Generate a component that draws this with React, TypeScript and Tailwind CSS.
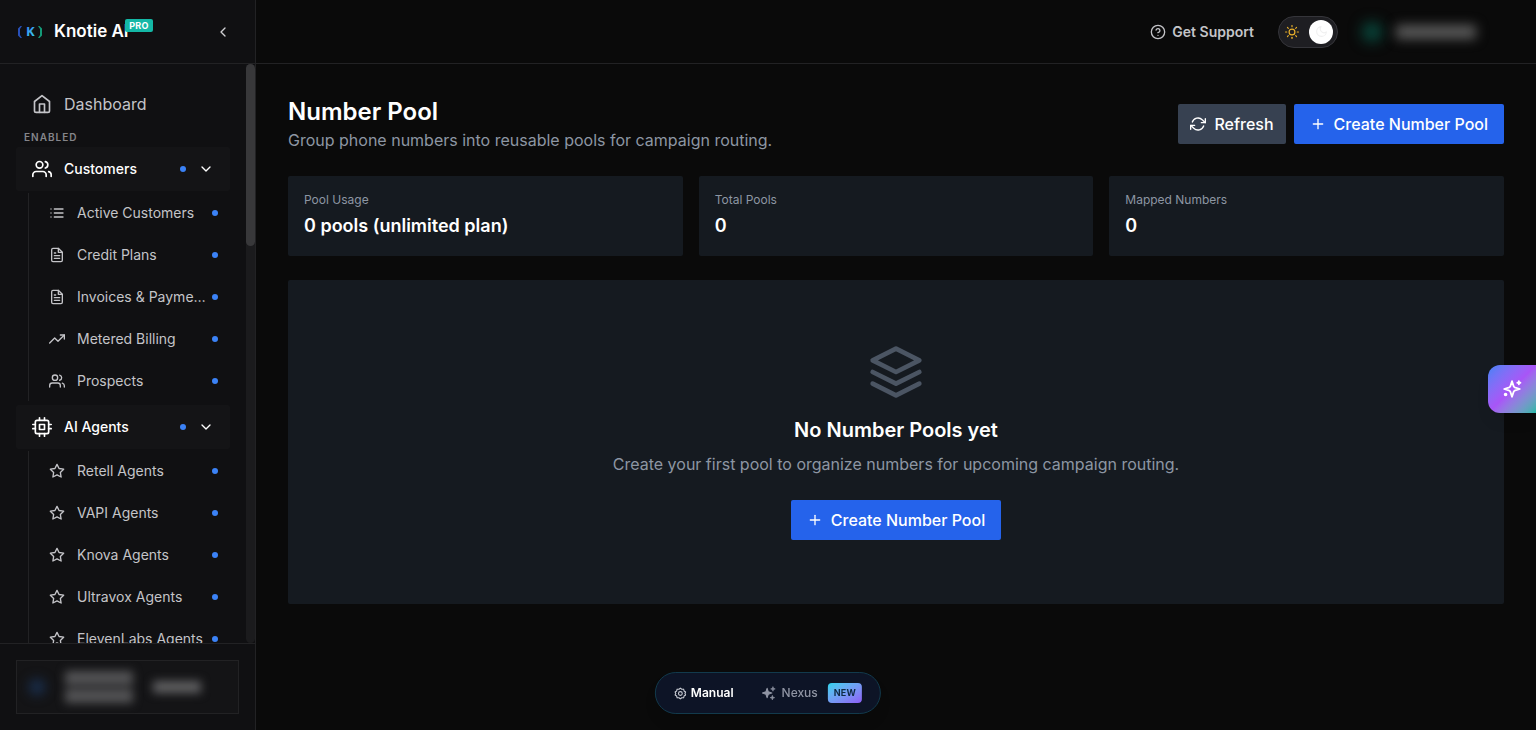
import { useState } from "react";
import {
  FiChevronDown,
  FiChevronLeft,
  FiCpu,
  FiFileText,
  FiHelpCircle,
  FiHome,
  FiLayers,
  FiList,
  FiMoon,
  FiPlus,
  FiRefreshCw,
  FiStar,
  FiSun,
  FiTrendingUp,
  FiUsers,
} from "react-icons/fi";

const menu = [
  {
    title: "Customers",
    icon: FiUsers,
    items: [
      { label: "Active Customers", icon: FiList },
      { label: "Credit Plans", icon: FiFileText },
      { label: "Invoices & Payments", icon: FiFileText },
      { label: "Metered Billing", icon: FiTrendingUp },
      { label: "Prospects", icon: FiUsers },
    ],
  },
  {
    title: "AI Agents",
    icon: FiCpu,
    items: [
      { label: "Retell Agents", icon: FiStar },
      { label: "VAPI Agents", icon: FiStar },
      { label: "Knova Agents", icon: FiStar },
      { label: "Ultravox Agents", icon: FiStar },
      { label: "ElevenLabs Agents", icon: FiStar },
    ],
  },
];

const stats = [
  { label: "Pool Usage", value: "0 pools (unlimited plan)" },
  { label: "Total Pools", value: "0" },
  { label: "Mapped Numbers", value: "0" },
];

const Logo = () => (
  <svg width="28" height="16" viewBox="0 0 28 16" fill="none" aria-hidden="true">
    <defs>
      <linearGradient id="logo-k" x1="9" y1="2" x2="18" y2="14" gradientUnits="userSpaceOnUse">
        <stop stopColor="#3b82f6" />
        <stop offset="1" stopColor="#38d0e8" />
      </linearGradient>
    </defs>
    <path d="M6 2H4.500L2 4.500v7L4.500 14H6L4 11V5z" fill="#2850b8" />
    <path d="M22 2h1.500L26 4.500v7L23.500 14H22l2-3V5z" fill="#149a78" />
    <text x="10" y="12" fontSize="13" fontWeight="700" fontFamily="Open Sans, sans-serif" fill="url(#logo-k)">
      K
    </text>
  </svg>
);

const Dot = () => <span className="w-1.5 h-1.5 shrink-0 rounded-full bg-[#3b82f6]" />;

const CreateButton = () => (
  <button className="h-10 px-4 flex items-center gap-2 rounded-xs bg-[#2563eb] hover:bg-blue-700 text-base font-medium text-white">
    <FiPlus size={16} />
    Create Number Pool
  </button>
);

const Sidebar = () => (
  <aside className="sticky top-0 w-64 h-screen shrink-0 flex flex-col bg-[#101012] border-r border-[#222224]">
    {/* Brand */}
    <div className="h-16 shrink-0 px-4 flex items-center border-b border-[#222224]">
      <a href="#" className="flex items-center gap-2.5">
        <Logo />
        <span className="relative text-[17px] font-semibold text-white">
          Knotie AI
          <span className="absolute top-0 -right-6 px-1 rounded-xs bg-[#14b8a6] text-[9px] leading-[13px] font-bold tracking-wide text-white">
            PRO
          </span>
        </span>
      </a>
      <button className="ml-auto p-2 text-[#d0d0d3]" aria-label="Collapse sidebar">
        <FiChevronLeft size={16} />
      </button>
    </div>

    {/* Menu */}
    <div className="flex-1 min-h-0 flex">
      <nav className="flex-1 min-w-0 p-4 overflow-y-auto [scrollbar-width:none]">
        <a href="#" className="h-12 px-4 flex items-center gap-3 text-base text-[#c4c4c8]">
          <FiHome size={20} />
          Dashboard
        </a>
        <p className="h-[19px] px-2 flex items-center text-[10px] font-semibold tracking-widest text-[#85858a]">
          ENABLED
        </p>
        {menu.map((group) => (
          <div key={group.title} className="mb-1">
            <button className="w-full h-11 px-4 flex items-center gap-3 rounded-xs bg-[#141416] text-sm font-medium text-white">
              <group.icon size={20} />
              <span className="flex-1 text-left">{group.title}</span>
              <Dot />
              <FiChevronDown size={16} />
            </button>
            <ul className="mt-0.5 ml-3 pl-2 flex flex-col gap-0.5 border-l border-[#222224]">
              {group.items.map((item) => (
                <li key={item.label}>
                  <a href="#" className="h-10 px-3 flex items-center text-sm text-[#c4c4c8] hover:text-white">
                    <item.icon size={16} className="shrink-0 mr-3" />
                    <span className="flex-1 mr-1 truncate">{item.label}</span>
                    <Dot />
                  </a>
                </li>
              ))}
            </ul>
          </div>
        ))}
      </nav>
      <div className="w-[9px] shrink-0 rounded-full bg-[#1b1b1d]">
        <div className="h-[182px] rounded-full bg-[#38383a]" />
      </div>
    </div>

    {/* Account */}
    <div className="shrink-0 p-4 border-t border-[#222224]">
      <button
        className="w-full h-[54px] px-3 flex items-center bg-[#141416] border border-[#222224]"
        aria-label="Account"
      >
        <span className="w-4 h-4 rounded-full bg-[#1a3050] blur-[6px]" />
        <span className="ml-5 flex flex-col gap-1 blur-[5px]">
          <span className="w-[68px] h-3.5 bg-[#545456]" />
          <span className="w-[68px] h-3.5 bg-[#545456]" />
        </span>
        <span className="ml-5 w-12 h-3 bg-[#606062] blur-[5px]" />
      </button>
    </div>
  </aside>
);

const Topbar = () => {
  const [dark, setDark] = useState(true);

  return (
    <header className="h-16 shrink-0 px-8 flex items-center justify-end border-b border-[#222224]">
      <a href="#" className="flex items-center gap-1.5 text-sm font-semibold text-[#c4c4c8]">
        <FiHelpCircle size={16} />
        Get Support
      </a>
      <label className="ml-6 w-[60px] h-8 pl-1.5 pr-1 flex items-center justify-between rounded-full bg-[#1e1e22] border border-[#35353a] cursor-pointer">
        <input
          type="checkbox"
          className="sr-only"
          aria-label="Dark mode"
          checked={dark}
          onChange={() => setDark(!dark)}
        />
        <FiSun size={14} className="text-[#eab02a]" />
        <span className="w-6 h-6 flex items-center justify-center rounded-full bg-white text-[#f0f0f0]">
          <FiMoon size={13} />
        </span>
      </label>
      <button className="ml-6 w-[142px] h-8 flex items-center" aria-label="Profile">
        <span className="w-5 h-5 rounded-full bg-[#084a3e] blur-[7px]" />
        <span className="ml-3.5 w-20 h-3.5 bg-[#5a5a5a] blur-[6px]" />
      </button>
    </header>
  );
};

const App = () => {
  return (
    <div className="min-h-screen flex bg-[#0a0a0a] text-white font-['Inter',sans-serif]">
      <Sidebar />
      <div className="flex-1 min-w-0 flex flex-col">
        <Topbar />
        <main className="p-8 flex flex-col gap-6">
          <div className="flex items-center justify-between">
            <div>
              <h1 className="text-2xl font-semibold">Number Pool</h1>
              <p className="text-base text-[#8d96a3]">
                Group phone numbers into reusable pools for campaign routing.
              </p>
            </div>
            <div className="flex gap-2">
              <button className="h-10 px-3 flex items-center gap-2 rounded-xs bg-[#374151] hover:bg-gray-600 text-base font-medium text-white">
                <FiRefreshCw size={16} />
                Refresh
              </button>
              <CreateButton />
            </div>
          </div>

          <div className="grid grid-cols-3 gap-4">
            {stats.map((stat) => (
              <div key={stat.label} className="p-4 rounded-xs bg-[#151a20]">
                <p className="text-xs text-[#8d96a3]">{stat.label}</p>
                <p className="mt-1 text-lg font-semibold">{stat.value}</p>
              </div>
            ))}
          </div>

          <section className="p-16 flex flex-col items-center rounded-xs bg-[#151a20]">
            <FiLayers size={56} className="text-[#4b5563]" />
            <h2 className="mt-4 text-xl font-semibold">No Number Pools yet</h2>
            <p className="mt-2 mb-6 text-base text-[#8d96a3]">
              Create your first pool to organize numbers for upcoming campaign routing.
            </p>
            <CreateButton />
          </section>
        </main>
      </div>

      {/* Mode switcher */}
      <div className="fixed bottom-4 left-1/2 -translate-x-1/2 h-[42px] px-[18px] flex items-center rounded-full bg-[#0d1426] border border-[#123a4c] text-xs shadow-lg">
        <button className="flex items-center gap-1 font-semibold text-white">
          <svg width="13" height="13" viewBox="0 0 24 24" fill="none" stroke="#c9ccd4" strokeWidth="2" strokeLinejoin="round">
            <path d="M12 2l2.600 2.200 3.400-.2.800 3.300L21.700 9.300 20.500 12l1.200 2.700-2.900 2-.8 3.300-3.400-.2L12 22l-2.600-2.200-3.400.2-.8-3.300-2.900-2L3.500 12 2.300 9.300l2.900-2L6 4l3.400.2z" />
            <circle cx="12" cy="12" r="3.500" />
          </svg>
          Manual
        </button>
        <button className="ml-7 flex items-center font-medium text-[#8f94a3]">
          <svg className="mr-1.5" width="14" height="14" viewBox="0 0 24 24" fill="currentColor">
            <path d="M9 4l2 6 6 2-6 2-2 6-2-6-6-2 6-2z" stroke="currentColor" strokeWidth="2" strokeLinejoin="round" />
            <path d="M19 1l1 3 3 1-3 1-1 3-1-3-3-1 3-1zM18 16l1 3 3 1-3 1-1 3-1-3-3-1 3-1z" stroke="currentColor" strokeLinejoin="round" />
          </svg>
          Nexus
          <span className="ml-2.5 h-5 px-1.5 flex items-center rounded-sm bg-linear-to-br from-[#22d3ee] to-[#8b5cf6] text-[9px] font-bold tracking-wide text-[#0f2a44]">
            NEW
          </span>
        </button>
      </div>

      {/* Assistant tab */}
      <button
        className="fixed right-0 top-[365px] w-12 h-12 flex items-center justify-center rounded-l-xl bg-linear-to-br from-[#3b82f6] via-[#a855f7] to-[#14b8a6] text-white shadow-lg"
        aria-label="Open assistant"
      >
        <svg width="22" height="22" viewBox="0 0 24 24" fill="none" stroke="currentColor" strokeWidth="2" strokeLinejoin="round">
          <path d="M12 3.500l1.900 5.700c.2.500.4.700.9.900L20.500 12l-5.700 1.900c-.5.200-.7.400-.9.900L12 20.500l-1.900-5.700c-.2-.5-.4-.7-.9-.9L3.500 12l5.700-1.900c.5-.2.700-.4.900-.9z" />
          <path d="M19.500 3.500v3.400M17.800 5.200h3.400" strokeLinecap="round" />
          <circle cx="5" cy="18" r="1" fill="currentColor" />
        </svg>
      </button>
    </div>
  );
};

export default App;
